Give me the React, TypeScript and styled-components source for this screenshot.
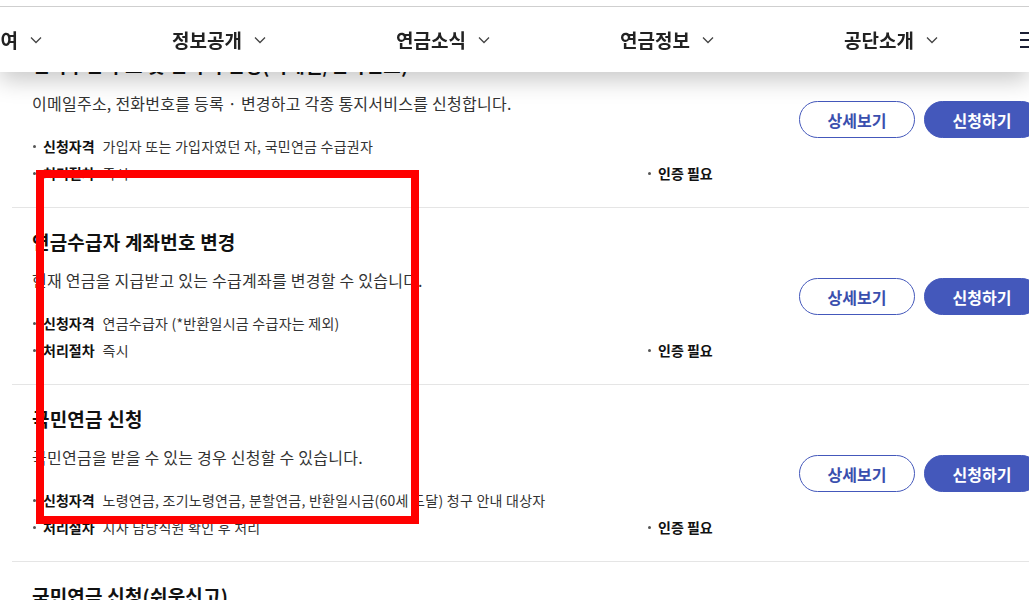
import React from "react";
import styled, { createGlobalStyle } from "styled-components";

interface Service {
  title: string;
  desc: string;
  target: string;
  process: string;
}

const services: Service[] = [
  {
    title: "전자우편 주소 및 연락처 변경(이메일/전화번호)",
    desc: "이메일주소, 전화번호를 등록 · 변경하고 각종 통지서비스를 신청합니다.",
    target: "가입자 또는 가입자였던 자, 국민연금 수급권자",
    process: "즉시",
  },
  {
    title: "연금수급자 계좌번호 변경",
    desc: "현재 연금을 지급받고 있는 수급계좌를 변경할 수 있습니다.",
    target: "연금수급자 (*반환일시금 수급자는 제외)",
    process: "즉시",
  },
  {
    title: "국민연금 신청",
    desc: "국민연금을 받을 수 있는 경우 신청할 수 있습니다.",
    target: "노령연금, 조기노령연금, 분할연금, 반환일시금(60세 도달) 청구 안내 대상자",
    process: "지사 담당직원 확인 후 처리",
  },
  {
    title: "국민연금 신청(쉬운신고)",
    desc: "국민연금을 받을 수 있는 경우 간편하게 신청할 수 있습니다.",
    target: "노령연금 청구 안내 대상자",
    process: "지사 담당직원 확인 후 처리",
  },
];

const menus = ["연금급여", "정보공개", "연금소식", "연금정보", "공단소개"];

const Chevron = () => (
  <svg width="12" height="8" viewBox="0 0 12 8" fill="none">
    <polyline points="1,1.5 6,6.5 11,1.5" stroke="#444" strokeWidth="1.3" />
  </svg>
);

const App: React.FC = () => {
  return (
    <>
      <GlobalStyle />
      <Header>
        <NavBar>
          {menus.map((m) => (
            <NavItem key={m}>
              {m}
              <Chevron />
            </NavItem>
          ))}
          <Burger>
            <span />
            <span />
            <span />
          </Burger>
        </NavBar>
      </Header>
      <List>
        {services.map((s) => (
          <Item key={s.title}>
            <Body>
              <Title>{s.title}</Title>
              <Desc>{s.desc}</Desc>
              <Meta>
                <MetaCell>
                  <Label>신청자격</Label>
                  {s.target}
                </MetaCell>
                <span />
                <MetaCell>
                  <Label>처리절차</Label>
                  {s.process}
                </MetaCell>
                <MetaCell>
                  <Label>인증 필요</Label>
                </MetaCell>
              </Meta>
            </Body>
            <Buttons>
              <Button>상세보기</Button>
              <Button $primary>신청하기</Button>
            </Buttons>
          </Item>
        ))}
      </List>
      <Marker />
    </>
  );
};

const GlobalStyle = createGlobalStyle`
  html, body {
    margin: 0;
    padding: 0;
    background: #fff;
    overflow: hidden;
    font-family: "Noto Sans CJK KR", "Noto Sans", sans-serif;
    color: #111;
  }
`;

const Header = styled.header`
  position: fixed;
  top: 0;
  left: 0;
  right: 0;
  z-index: 10;
  padding-top: 6px;
  background: #fff;
  box-shadow: 0 8px 22px rgba(0, 0, 0, 0.22);
`;

const NavBar = styled.nav`
  display: flex;
  align-items: center;
  height: 65px;
  border-top: 1px solid #cfcfcf;
  margin-left: -117px;
`;

const NavItem = styled.div`
  flex: 0 0 224px;
  display: flex;
  align-items: center;
  justify-content: center;
  gap: 12px;
  font-size: 19px;
  font-weight: 700;
  color: #222;
`;

const Burger = styled.div`
  display: flex;
  flex-direction: column;
  gap: 5px;
  margin-left: 17px;

  span {
    display: block;
    width: 18px;
    height: 2px;
    background: #1b2035;
  }
`;

const List = styled.ul`
  list-style: none;
  margin: 30px 0 0 12px;
  padding: 0;
  width: 1028px;
`;

const Item = styled.li`
  display: flex;
  align-items: center;
  justify-content: space-between;
  border-top: 1px solid #e5e5e5;
  padding: 21px 0 20px 20px;
`;

const Body = styled.div`
  display: flex;
  flex-direction: column;
`;

const Title = styled.h3`
  margin: 0;
  font-size: 19px;
  line-height: 26px;
  font-weight: 700;
  color: #111;
  letter-spacing: 0.2px;
`;

const Desc = styled.p`
  margin: 13px 0 0;
  font-size: 16px;
  line-height: 24px;
  color: #333;
  letter-spacing: 0.25px;
`;

const Meta = styled.div`
  display: grid;
  grid-template-columns: 615px auto;
  margin-top: 18px;
  font-size: 14px;
  line-height: 27px;
  color: #333;
  white-space: nowrap;
  letter-spacing: 0.25px;
`;

const MetaCell = styled.div`
  display: flex;
  align-items: center;

  &::before {
    content: "";
    width: 3px;
    height: 3px;
    border-radius: 50%;
    background: #555;
    margin: 0 7px 0 1px;
  }
`;

const Label = styled.strong`
  font-weight: 700;
  color: #111;
  margin-right: 8px;
  letter-spacing: 0;
`;

const Buttons = styled.div`
  display: flex;
  gap: 9px;
`;

const Button = styled.button<{ $primary?: boolean }>`
  width: 116px;
  height: 37px;
  border-radius: 19px;
  border: 1px solid #4458bb;
  background: ${(p) => (p.$primary ? "#4458bb" : "#fff")};
  color: ${(p) => (p.$primary ? "#fff" : "#3a4fae")};
  font-family: inherit;
  font-size: 16px;
  font-weight: 700;
  cursor: pointer;
`;

const Marker = styled.div`
  position: absolute;
  left: 36px;
  top: 170px;
  width: 383px;
  height: 354px;
  box-sizing: border-box;
  border: 8px solid #ff0000;
  pointer-events: none;
`;

export default App;
